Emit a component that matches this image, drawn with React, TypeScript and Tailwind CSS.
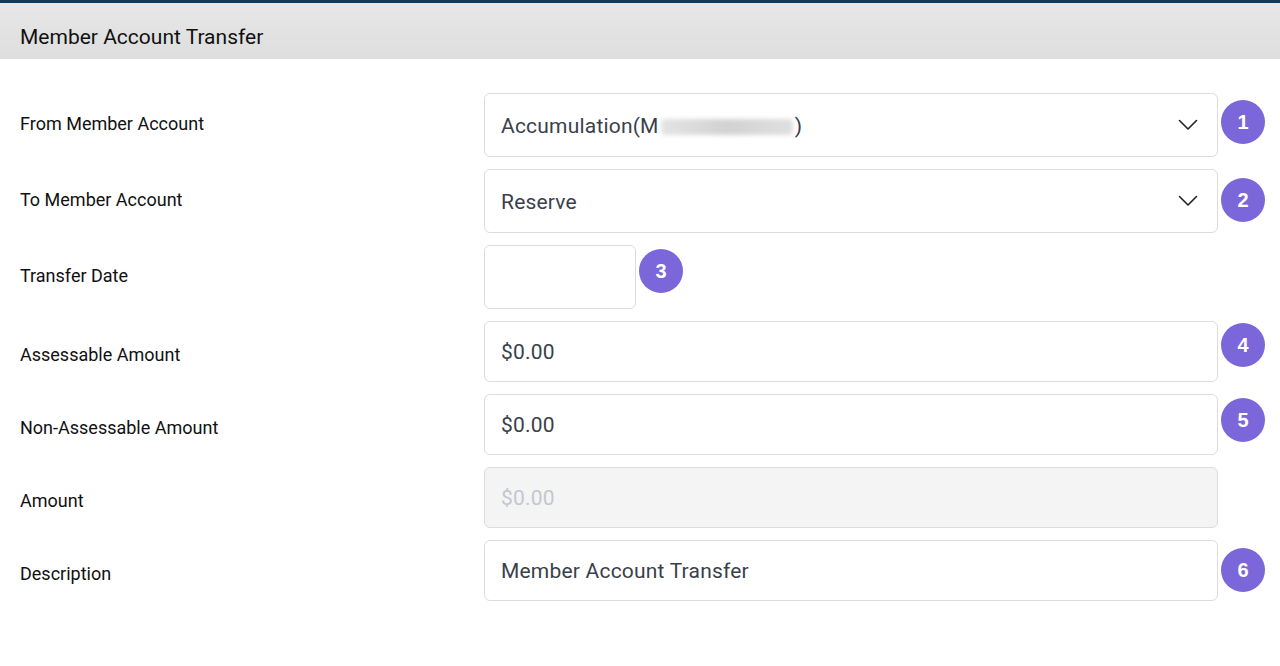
import React from 'react';

interface FieldRowProps {
  label: string;
  badge?: number;
  badgeOffset?: string;
  tall?: boolean;
  children: React.ReactNode;
}

function Badge({ n, offset }: { n: number; offset: string }) {
  return (
    <div
      className={`ml-[3px] ${offset} flex h-[44px] w-[44px] shrink-0 items-center justify-center rounded-full bg-[#7b67d9] text-[20px] font-bold text-white`}
      style={{ fontFamily: '"Liberation Sans", Arial, sans-serif' }}
    >
      {n}
    </div>
  );
}

function FieldRow({ label, badge, badgeOffset = 'mt-[4px]', tall, children }: FieldRowProps) {
  return (
    <div className={`flex items-start ${tall ? 'h-[64px]' : 'h-[61px]'}`}>
      <div
        className={`flex h-full w-[464px] shrink-0 items-center text-[18px] text-[#111] ${
          tall ? 'pb-[3px]' : 'pt-[5px]'
        }`}
      >
        {label}
      </div>
      {children}
      {badge !== undefined && <Badge n={badge} offset={badgeOffset} />}
    </div>
  );
}

function Chevron() {
  return (
    <svg width="20" height="12" viewBox="0 0 20 12" fill="none" className="mb-[3px] shrink-0">
      <path d="M1.5 1.5 L10 10 L18.5 1.5" stroke="#222" strokeWidth="1.6" strokeLinecap="round" strokeLinejoin="round" />
    </svg>
  );
}

const boxBase =
  'flex h-full shrink-0 items-center rounded-[6px] border border-[#dcdcdc] px-4 pt-[3px] text-[21px] tracking-[0.2px] text-[#3a3f4b]';

export default function App() {
  return (
    <div className="min-h-[666px] overflow-hidden bg-white" style={{ fontFamily: 'Roboto, "Liberation Sans", sans-serif' }}>
      <div className="h-[3px] bg-[#0e3a5c]" />
      <div className="flex h-[56px] items-center bg-gradient-to-b from-[#e7e7e7] to-[#dedede] px-5 pt-[13px] text-[21px] text-[#111]">
        Member Account Transfer
      </div>

      <div className="flex flex-col gap-3 px-5 pt-[34px]">
        <FieldRow label="From Member Account" badge={1} badgeOffset="mt-[7px]" tall>
          <div className={`${boxBase} w-[734px] justify-between pr-[19px]`}>
            <span className="flex items-center">
              Accumulation(M
              <span className="mx-[2px] inline-block h-[16px] w-[132px] rounded-sm bg-gradient-to-r from-[#e4e4e4] via-[#d2d2d2] to-[#e0e0e0] blur-[2px]" />
              )
            </span>
            <Chevron />
          </div>
        </FieldRow>

        <FieldRow label="To Member Account" badge={2} badgeOffset="mt-[9px]" tall>
          <div className={`${boxBase} w-[734px] justify-between pr-[19px]`}>
            <span>Reserve</span>
            <Chevron />
          </div>
        </FieldRow>

        <FieldRow label="Transfer Date" badge={3} badgeOffset="mt-[4px] ml-[2px]" tall>
          <div className={`${boxBase} w-[152px]`} />
        </FieldRow>

        <FieldRow label="Assessable Amount" badge={4} badgeOffset="mt-[2px]">
          <div className={`${boxBase} w-[734px]`}>$0.00</div>
        </FieldRow>

        <FieldRow label="Non-Assessable Amount" badge={5} badgeOffset="mt-[4px]">
          <div className={`${boxBase} w-[734px]`}>$0.00</div>
        </FieldRow>

        <FieldRow label="Amount">
          <div className={`${boxBase} w-[734px] bg-[#f4f4f5] text-[#c3c7cf]`}>$0.00</div>
        </FieldRow>

        <FieldRow label="Description" badge={6} badgeOffset="mt-[8px]">
          <div className={`${boxBase} w-[734px]`}>Member Account Transfer</div>
        </FieldRow>
      </div>
    </div>
  );
}
